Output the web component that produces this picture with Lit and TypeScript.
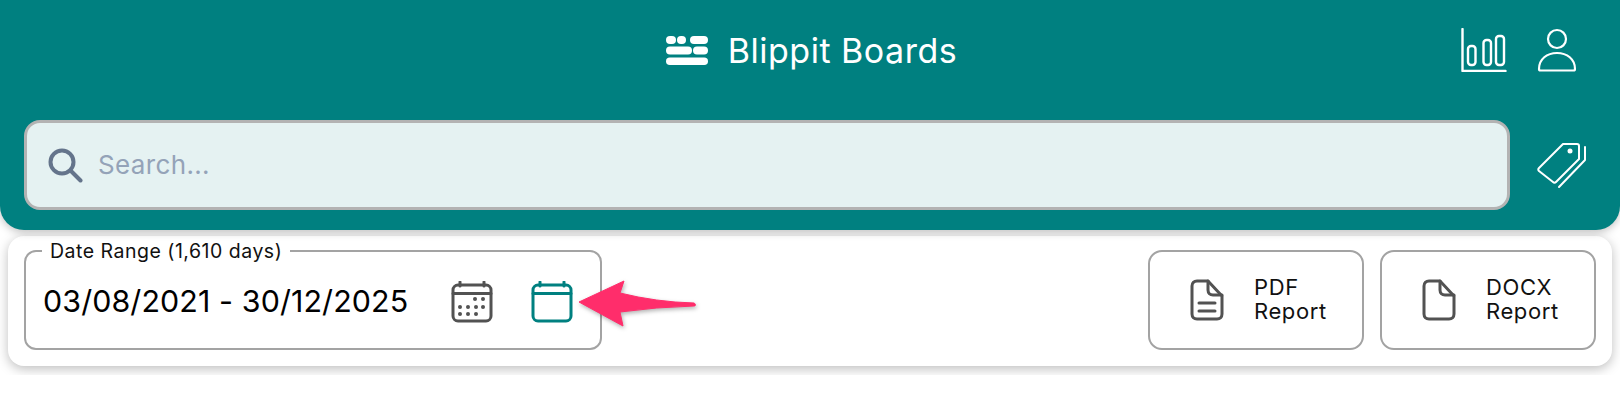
import { LitElement, html, css, svg } from "lit";
import { customElement } from "lit/decorators.js";

@customElement("app-root")
export class AppRoot extends LitElement {
  static styles = css`
    :host { display: block; width: 1620px; height: 416px; background: #fff; font-family: Inter, "Liberation Sans", sans-serif; position: relative; overflow: hidden; }
    .header { background: #008080; height: 230px; box-sizing: border-box; border-radius: 0 0 24px 24px; box-shadow: 0 2px 8px rgba(0,0,0,.25); padding: 0 33px 20px 24px; display: flex; flex-direction: column; position: relative; }
    .top { height: 120px; box-sizing: border-box; padding: 0 0 20px 3px; margin-right: -33px; margin-left: -24px; display: flex; align-items: center; justify-content: center; gap: 20px; color: #fff; font-size: 34px; letter-spacing: .5px; position: relative; }
    .top-icons { position: absolute; left: 1461px; top: 28px; display: flex; gap: 30px; }
    svg { display: block; }
    .search-row { display: flex; align-items: center; gap: 27px; }
    .search { flex: 1; height: 90px; box-sizing: border-box; border: 3px solid #b3b3b3; border-radius: 16px; background: #e5f2f2; display: flex; align-items: center; gap: 15px; padding-left: 20px; color: #94a3b8; font-size: 26px; letter-spacing: .35px; }
    .search span { margin-top: -2px; }
    .card-wrap { height: 145px; overflow: hidden; padding: 0 8px; }
    .card { margin-top: 6px; height: 130px; box-sizing: border-box; border-radius: 16px; background: #fff; box-shadow: 0 3px 12px rgba(0,0,0,.26); padding: 14px 16px 16px; display: flex; justify-content: space-between; }
    fieldset { margin: -11px 0 0; width: 578px; box-sizing: border-box; border: 2px solid #a3a3a3; border-radius: 12px; padding: 0 27px 0 16px; display: flex; height: 111px; }
    legend { font-size: 19.5px; line-height: 24px; padding: 0 8px; margin-left: 0; color: #111; letter-spacing: .5px; }
    .range { display: flex; align-items: center; width: 100%; margin-top: -8px; }
    .dates { font-size: 30.4px; letter-spacing: .1px; color: #000; flex: 1; white-space: nowrap; margin: -2px 0 0 1px; }
    .cal { margin-left: 38px; }
    .buttons { display: flex; gap: 16px; }
    .btn { width: 216px; height: 100px; box-sizing: border-box; border: 2px solid #a3a3a3; border-radius: 14px; display: flex; align-items: center; gap: 30px; padding-left: 40px; font-size: 22px; letter-spacing: .6px; line-height: 24px; color: #111; }
    .btn span { margin-top: -2px; }
    .arrow { position: absolute; left: 578px; top: 276px; filter: drop-shadow(1px 2px 2px rgba(0,0,0,.3)); }
  `;

  render() {
    return html`
      <div class="header">
        <div class="top">
          <svg width="42" height="29" viewBox="0 0 42 29" fill="#fff">
            <rect x="0" y="0" width="10" height="8" rx="4"/><rect x="11" y="0" width="9" height="8" rx="4"/><rect x="24" y="0" width="18" height="8" rx="4"/>
            <rect x="0" y="10.500" width="26" height="8" rx="4"/><rect x="27" y="10.500" width="15" height="8" rx="4"/>
            <rect x="0" y="21.500" width="42" height="7.500" rx="3.750"/>
          </svg>
          <span>Blippit Boards</span>
          <div class="top-icons">
            <svg width="46" height="44" viewBox="0 0 46 44" fill="none" stroke="#fff" stroke-width="2.400" stroke-linecap="round" stroke-linejoin="round">
              <path d="M1.500 1v42h43"/>
              <rect x="7" y="18" width="7.500" height="19" rx="3"/><rect x="22.500" y="12" width="7.500" height="25" rx="3"/><rect x="35" y="8" width="8" height="29" rx="3"/>
            </svg>
            <svg width="40" height="44" viewBox="0 0 40 44" fill="none" stroke="#fff" stroke-width="2.200" stroke-linejoin="round">
              <circle cx="20" cy="11" r="9"/>
              <path d="M2 41c0-10 8-16 18-16s18 6 18 16c0 1-.5 1.500-1.500 1.500h-33c-1 0-1.500-.5-1.500-1.500z"/>
            </svg>
          </div>
        </div>
        <div class="search-row">
          <div class="search">
            <svg width="36" height="36" viewBox="0 0 36 36" fill="none" stroke="#64748b" stroke-width="4">
              <circle cx="15" cy="15" r="11.500"/><path d="M23.500 23.500l10 10" stroke-linecap="round"/>
            </svg>
            <span>Search...</span>
          </div>
          <svg width="50" height="48" viewBox="0 0 50 48" fill="none" stroke="#fff" stroke-width="2" stroke-linejoin="round" stroke-linecap="round">
            <path d="M2 27L26 3h14c1.500 0 2 .5 2 2v13L19 41c-1 1-2 1-3 0L2 30c-1-1-1-2 0-3z"/>
            <circle cx="33" cy="10" r="2.500" fill="#fff" stroke="none"/>
            <path d="M48 6v13L22 46"/>
          </svg>
        </div>
      </div>
      <div class="card-wrap">
        <div class="card">
          <fieldset>
            <legend>Date Range (1,610 days)</legend>
            <div class="range">
              <div class="dates">03/08/2021 - 30/12/2025</div>
              <svg class="cal" width="42" height="42" viewBox="0 0 42 42" fill="none" stroke="#525252" stroke-width="3" stroke-linecap="round">
                <rect x="2" y="4" width="38" height="36" rx="5"/>
                <path d="M9 1v4M33 1v4M2 12.500h38"/>
                ${[[24,18],[32,18],[9,26],[17,26],[25,26],[32,26],[9,33],[17,33],[25,33]].map(([x,y]) => svg`<circle cx="${x}" cy="${y}" r="2" fill="#525252" stroke="none"/>`)}
              </svg>
              <svg class="cal" width="42" height="42" viewBox="0 0 42 42" fill="none" stroke="#008080" stroke-width="3" stroke-linecap="round">
                <rect x="2" y="4" width="38" height="36" rx="5"/>
                <path d="M9 1v4M33 1v4M2 12.500h38"/>
              </svg>
            </div>
          </fieldset>
          <div class="buttons">
            <div class="btn">
              <svg width="34" height="42" viewBox="0 0 34 42" fill="none" stroke="#525252" stroke-width="3" stroke-linejoin="round" stroke-linecap="round">
                <path d="M7 2h11l14 15v18c0 3-2 5-5 5H7c-3 0-5-2-5-5V7c0-3 2-5 5-5z"/>
                <path d="M18 2v9c0 3 2 5 5 5h9M9 24h16M9 32h16"/>
              </svg>
              <span>PDF<br />Report</span>
            </div>
            <div class="btn">
              <svg width="34" height="42" viewBox="0 0 34 42" fill="none" stroke="#525252" stroke-width="3" stroke-linejoin="round" stroke-linecap="round">
                <path d="M7 2h11l14 15v18c0 3-2 5-5 5H7c-3 0-5-2-5-5V7c0-3 2-5 5-5z"/>
                <path d="M18 2v9c0 3 2 5 5 5h9"/>
              </svg>
              <span>DOCX<br />Report</span>
            </div>
          </div>
        </div>
      </div>
      <svg class="arrow" width="120" height="54" viewBox="0 0 120 54">
        <path d="M1 26L46 5l-4 12Q78 26 116 27c2 1 2 3 0 3Q78 31 42 36l3 14z" fill="#ff2d6b" stroke="#ff2d6b" stroke-width="1" stroke-linejoin="round"/>
      </svg>
    `;
  }
}
